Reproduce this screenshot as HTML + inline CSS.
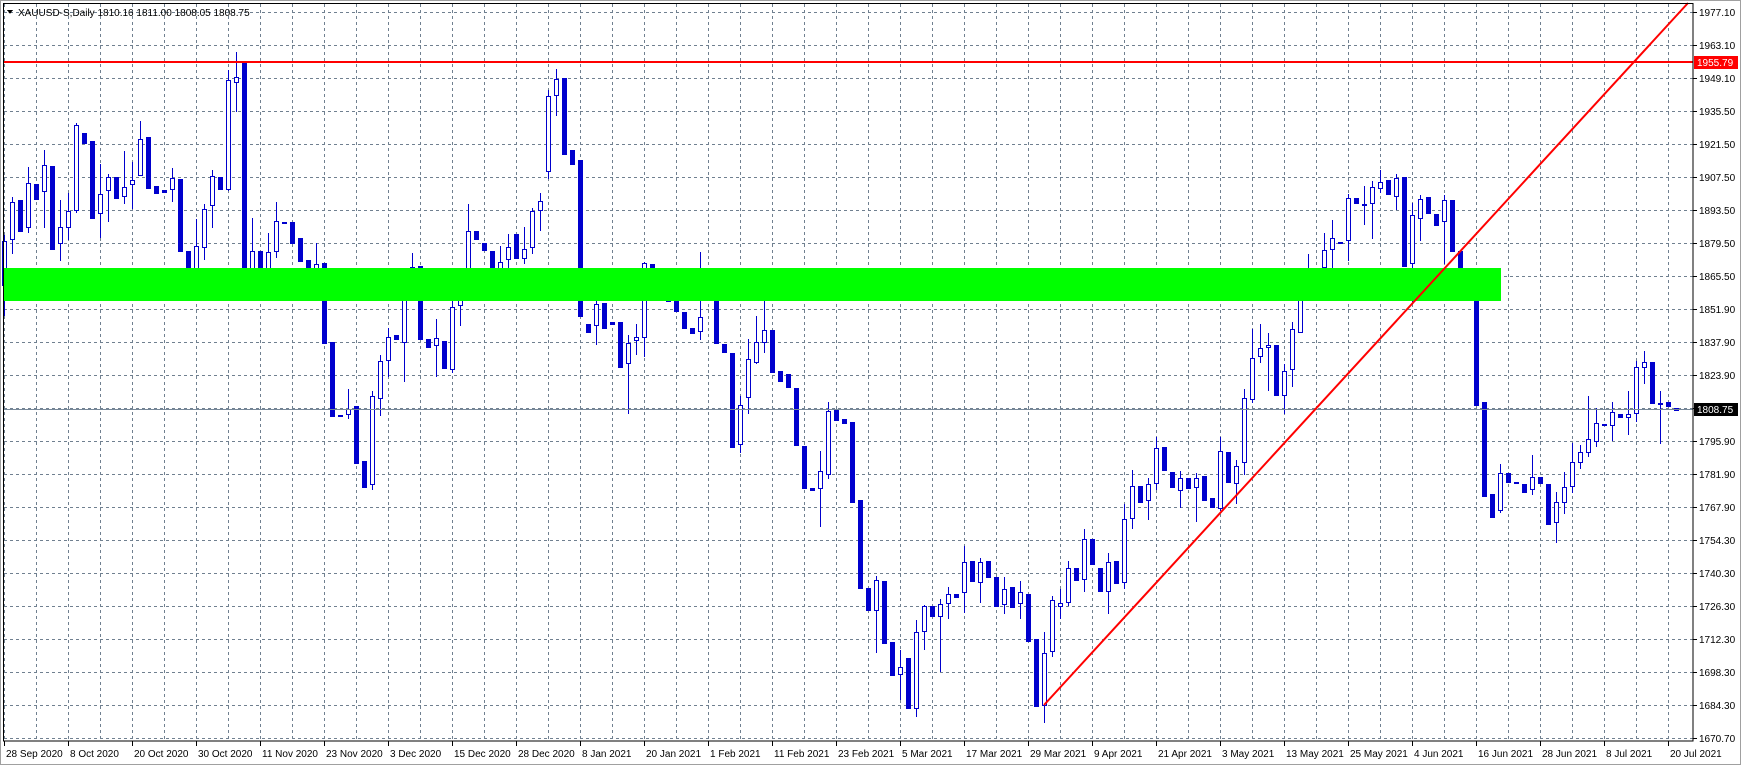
<!DOCTYPE html>
<html><head><meta charset="utf-8">
<style>
html,body{margin:0;padding:0;background:#fff;width:1741px;height:765px;overflow:hidden}
svg{display:block}
text{font-family:"Liberation Sans",sans-serif;font-size:10px;fill:#000}
</style></head><body>
<svg id="s" width="1741" height="765" viewBox="0 0 1741 765" xmlns="http://www.w3.org/2000/svg" shape-rendering="crispEdges">
<rect x="0" y="0" width="1741" height="765" fill="#fff"/>
<rect x="0.5" y="0.5" width="1740" height="764" fill="none" stroke="#a0a0a0"/>
<g id="grid" stroke="#708090" stroke-width="1" stroke-dasharray="3,3"></g>
<g id="candles"></g>
<rect x="4" y="268" width="1497" height="33" fill="#00ff00"/>
<line x1="3" y1="409.5" x2="1693" y2="409.5" stroke="#778899" stroke-width="1"/>
<line x1="3" y1="62" x2="1693" y2="62" stroke="#ff0000" stroke-width="2"/>
<line x1="1044" y1="705" x2="1688" y2="3" stroke="#ff0000" stroke-width="2" shape-rendering="auto"/>
<rect x="3.5" y="3.5" width="1689.5" height="737.5" fill="none" stroke="#000" stroke-width="1"/>
<g id="ticks" stroke="#000"></g>
<g id="plabels">
<text x="1699" y="16">1977.10</text>
<text x="1699" y="49">1963.10</text>
<text x="1699" y="82">1949.10</text>
<text x="1699" y="115">1935.50</text>
<text x="1699" y="148">1921.50</text>
<text x="1699" y="181">1907.50</text>
<text x="1699" y="214">1893.50</text>
<text x="1699" y="247">1879.50</text>
<text x="1699" y="280">1865.50</text>
<text x="1699" y="313">1851.90</text>
<text x="1699" y="346">1837.90</text>
<text x="1699" y="379">1823.90</text>
<text x="1699" y="445">1795.90</text>
<text x="1699" y="478">1781.90</text>
<text x="1699" y="511">1767.90</text>
<text x="1699" y="544">1754.30</text>
<text x="1699" y="577">1740.30</text>
<text x="1699" y="610">1726.30</text>
<text x="1699" y="643">1712.30</text>
<text x="1699" y="676">1698.30</text>
<text x="1699" y="709">1684.30</text>
<text x="1699" y="742">1670.70</text>
</g>
<rect x="1694" y="56" width="44" height="13" fill="#ff0000"/>
<text x="1697" y="66" style="fill:#fff">1955.79</text>
<rect x="1694" y="403" width="44" height="13" fill="#000"/>
<text x="1697" y="413" style="fill:#fff">1808.75</text>
<g id="dlabels">
<text x="6" y="757">28 Sep 2020</text>
<text x="70" y="757">8 Oct 2020</text>
<text x="134" y="757">20 Oct 2020</text>
<text x="198" y="757">30 Oct 2020</text>
<text x="262" y="757">11 Nov 2020</text>
<text x="326" y="757">23 Nov 2020</text>
<text x="390" y="757">3 Dec 2020</text>
<text x="454" y="757">15 Dec 2020</text>
<text x="518" y="757">28 Dec 2020</text>
<text x="582" y="757">8 Jan 2021</text>
<text x="646" y="757">20 Jan 2021</text>
<text x="710" y="757">1 Feb 2021</text>
<text x="774" y="757">11 Feb 2021</text>
<text x="838" y="757">23 Feb 2021</text>
<text x="902" y="757">5 Mar 2021</text>
<text x="966" y="757">17 Mar 2021</text>
<text x="1030" y="757">29 Mar 2021</text>
<text x="1094" y="757">9 Apr 2021</text>
<text x="1158" y="757">21 Apr 2021</text>
<text x="1222" y="757">3 May 2021</text>
<text x="1286" y="757">13 May 2021</text>
<text x="1350" y="757">25 May 2021</text>
<text x="1414" y="757">4 Jun 2021</text>
<text x="1478" y="757">16 Jun 2021</text>
<text x="1542" y="757">28 Jun 2021</text>
<text x="1606" y="757">8 Jul 2021</text>
<text x="1670" y="757">20 Jul 2021</text>
</g>
<polygon points="7,10 13,10 10,14" fill="#000"/>
<text x="18" y="16">XAUUSD-S,Daily  1810.16 1811.00 1808.05 1808.75</text>
</svg>
<script>
var NS="http://www.w3.org/2000/svg";
function el(n,a,p){var e=document.createElementNS(NS,n);for(var k in a)e.setAttribute(k,a[k]);p.appendChild(e);return e;}
var g=document.getElementById("grid");
for(var i=0;i<23;i++){var y=12+33*i+0.5;el("line",{x1:4,y1:y,x2:1693,y2:y},g);}
for(var k=0;k<53;k++){var x=4+32*k+0.5;el("line",{x1:x,y1:4,x2:x,y2:741},g);}
var t=document.getElementById("ticks");
for(var i=0;i<23;i++){var y=12+33*i+0.5;el("line",{x1:1693,y1:y,x2:1697,y2:y},t);}
for(var k=0;k<27;k++){var x=4+64*k+0.5;el("line",{x1:x,y1:741,x2:x,y2:746},t);}
var D=[[241,285,235,315,1],[202,239,197,253,1],[200,231,0,0,0],[183,227,167,232,1],[184,199,0,0,0],[165,191,150,227,1],[166,249,0,0,0],[227,243,200,260,1],[211,227,193,239,1],[125,210,123,212,1],
[133,143,0,0,0],[141,218,0,0,0],[194,213,164,237,1],[177,190,174,221,1],[177,198,0,0,0],[187,196,151,203,1],[180,184,162,208,1],[139,175,121,175,1],[137,188,0,0,0],[186,193,0,0,0],
[190,192,0,0,0],[178,189,168,201,1],[179,251,0,0,0],[251,273,251,290,0],[246,270,219,279,1],[209,247,204,259,1],[176,205,170,227,1],[177,189,0,0,0],[80,189,70,190,1],[77,82,52,111,1],
[63,286,0,0,0],[251,282,218,289,1],[251,279,0,0,0],[252,276,233,283,1],[221,251,202,257,1],[222,223,0,0,0],[222,243,0,0,0],[238,261,0,0,0],[260,278,0,0,0],[264,282,243,289,1],
[263,343,0,0,0],[342,416,0,0,0],[415,416,0,0,0],[409,414,389,418,1],[406,463,0,0,0],[461,487,0,0,0],[396,484,391,489,1],[361,398,355,415,1],[337,360,328,376,1],[335,339,0,0,0],
[286,342,269,381,1],[267,285,253,289,1],[266,339,0,0,0],[339,347,0,0,0],[338,345,319,376,1],[341,368,0,0,0],[307,369,301,372,1],[282,305,276,325,1],[231,281,204,286,1],[231,239,0,0,0],
[243,250,0,0,0],[251,289,0,0,0],[262,289,246,298,1],[247,259,234,268,1],[234,258,0,0,0],[249,258,227,263,1],[211,247,208,253,1],[201,210,193,230,1],[96,171,90,178,1],[79,95,69,115,1],
[78,154,0,0,0],[150,164,0,0,0],[160,316,0,0,0],[324,332,0,0,0],[304,325,281,344,1],[303,328,0,0,0],[322,324,0,0,0],[322,367,0,0,0],[343,363,335,413,1],[337,340,324,354,1],
[263,337,262,356,1],[264,268,0,0,0],[268,299,0,0,0],[299,301,0,0,0],[301,311,0,0,0],[312,328,0,0,0],[328,333,0,0,0],[317,331,252,339,1],[281,290,0,0,0],[291,343,0,0,0],
[344,352,0,0,0],[353,447,0,0,0],[405,444,396,452,1],[359,397,339,413,1],[342,362,316,363,1],[330,342,300,352,1],[330,372,0,0,0],[371,381,0,0,0],[374,387,0,0,0],[388,445,0,0,0],
[446,488,0,0,0],[488,490,0,0,0],[471,488,451,526,1],[411,474,402,478,1],[409,420,0,0,0],[419,423,0,0,0],[422,502,0,0,0],[500,588,0,0,0],[588,610,0,0,0],[580,610,576,652,1],
[581,643,0,0,0],[642,675,0,0,0],[667,674,650,699,1],[658,708,0,0,0],[632,708,620,716,1],[606,631,605,649,1],[606,616,0,0,0],[604,616,599,671,1],[594,603,587,618,1],[594,597,0,0,0],
[562,592,546,612,1],[561,581,0,0,0],[562,582,558,602,1],[561,577,0,0,0],[577,606,0,0,0],[589,604,577,613,1],[587,607,0,0,0],[592,603,581,618,1],[594,641,0,0,0],[639,706,0,0,0],
[653,705,632,722,1],[600,651,596,656,1],[603,606,589,618,1],[568,602,561,605,1],[568,580,0,0,0],[539,579,529,591,1],[539,564,0,0,0],[568,591,0,0,0],[562,591,553,613,1],[561,583,0,0,0],
[519,582,504,588,1],[486,518,470,528,1],[486,502,0,0,0],[484,500,478,519,1],[448,483,437,489,1],[447,470,0,0,0],[472,487,0,0,0],[478,490,471,507,1],[478,488,0,0,0],[478,487,473,521,1],
[476,500,0,0,0],[498,507,0,0,0],[451,508,437,510,1],[452,482,0,0,0],[466,483,460,503,1],[398,462,389,474,1],[358,399,329,402,1],[348,356,324,362,1],[345,347,333,390,1],[345,395,0,0,0],
[371,395,364,413,1],[329,369,322,386,1],[276,332,270,332,1],[269,273,254,283,1],[270,277,0,0,0],[250,267,233,281,1],[238,249,220,267,1],[242,243,0,0,0],[198,240,194,260,1],[198,203,0,0,0],
[204,205,186,224,1],[187,203,181,238,1],[182,188,170,192,1],[180,194,0,0,0],[178,196,174,209,1],[177,266,0,0,0],[215,263,203,301,1],[199,218,195,240,1],[197,213,0,0,0],[214,225,0,0,0],
[200,221,195,263,1],[200,251,0,0,0],[251,276,0,0,0],[274,293,0,0,0],[293,405,0,0,0],[402,496,0,0,0],[494,517,0,0,0],[473,510,464,512,1],[473,482,0,0,0],[482,483,0,0,0],
[484,492,0,0,0],[477,489,455,494,1],[477,483,0,0,0],[484,524,0,0,0],[502,522,492,542,1],[487,502,472,513,1],[462,486,443,492,1],[452,462,445,468,1],[439,452,396,456,1],[423,441,408,446,1],
[424,425,0,0,0],[412,425,402,440,1],[414,417,0,0,0],[414,417,391,434,1],[367,413,361,421,1],[362,367,351,383,1],[362,403,0,0,0],[403,404,391,443,0],[402,406,0,0,0],[408,410,0,0,0]];
var c=document.getElementById("candles");var B="#0000cd";
for(var i=0;i<D.length;i++){var d=D[i],cx=4+8*i;var wt=d[2]||d[0],wb=d[3]||d[1];
 if(wt<d[0]||wb>d[1])el("line",{x1:cx+0.5,y1:wt,x2:cx+0.5,y2:wb+1,stroke:B},c);
 if(d[4]){el("rect",{x:cx-1.5,y:d[0]+0.5,width:4,height:Math.max(1,d[1]-d[0]),fill:"#fff",stroke:B},c);}
 else{el("rect",{x:cx-2,y:d[0],width:5,height:Math.max(2,d[1]-d[0]+1),fill:B},c);}
}
</script>
</body></html>
